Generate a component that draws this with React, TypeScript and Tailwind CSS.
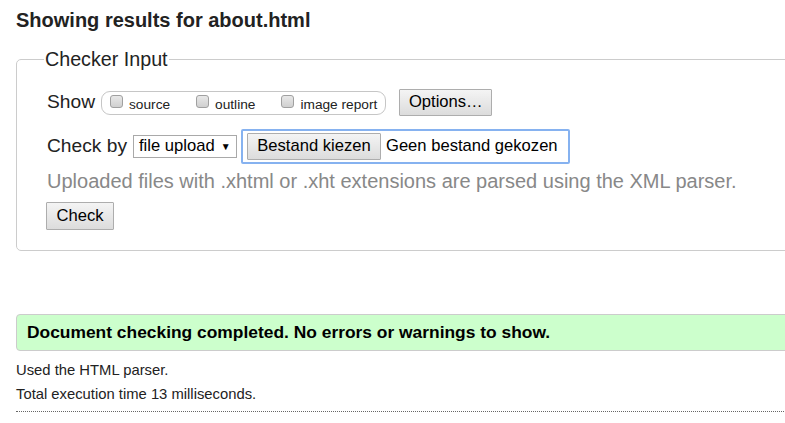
import React from "react";

const Box = ({ label }: { label: string }) => (
  <label className="flex items-start gap-[6px] pl-[8px] pr-[18px] last:pr-[8px]">
    <span className="mt-[1px] block w-[13px] h-[13px] rounded-[3px] border border-[#a0a0a0] bg-gradient-to-b from-[#e8e8e8] to-[#d0d0d0]" />
    <span className="text-[13.7px] leading-[16px] mt-[3px]">{label}</span>
  </label>
);

const btn =
  "border border-[#adadad] bg-gradient-to-b from-[#f4f4f4] to-[#dcdcdc] text-black rounded-[1px]";

const App = () => {
  return (
    <div className="w-[785px] h-[423px] overflow-hidden bg-white text-[#222] font-['Liberation_Sans',Arial,sans-serif]">
      <div className="w-[830px] pl-4 pt-[9px]">
        <h2 className="text-[20px] leading-[23px] font-bold">
          Showing results for about.html
        </h2>

        <fieldset className="mt-[16px] border border-[#ccc] rounded-[5px] pl-[30px] pb-[19px] h-[203px]">
          <legend className="ml-[-3px] px-[1px] text-[19.7px] leading-[23px]">
            Checker Input
          </legend>

          <div className="flex items-center mt-[18px] h-[27px]">
            <span className="text-[19.2px] mr-[6px]">Show</span>
            <div className="flex h-[24px] items-start pt-[2px] border border-[#c6c6c6] rounded-[9px]">
              <Box label="source" />
              <Box label="outline" />
              <Box label="image report" />
            </div>
            <button className={`${btn} ml-[13px] h-[27px] w-[93px] text-[16.6px]`}>
              Options…
            </button>
          </div>

          <div className="flex items-center mt-[12px] h-[36px]">
            <span className="text-[19.2px] mr-[6px]">Check by</span>
            <div className="h-[23px] w-[104px] border border-[#a9a9a9] bg-white flex items-center pl-[5px] text-[16.6px] text-black">
              file upload
              <span className="ml-[6px] text-[10px]">▼</span>
            </div>
            <div className="ml-[4px] h-[35px] w-[329px] border-2 border-[#86b2f0] rounded-[2px] flex items-center pl-[4px]">
              <button className={`${btn} h-[27px] w-[134px] text-[16.6px]`}>
                Bestand kiezen
              </button>
              <span className="ml-[5px] text-[16.6px] text-black">Geen bestand gekozen</span>
            </div>
          </div>

          <p className="mt-[2px] text-[20px] leading-[30px] text-[#888]">
            Uploaded files with .xhtml or .xht extensions are parsed using the XML parser.
          </p>

          <button className={`${btn} mt-[6px] ml-[-1px] h-[28px] w-[68px] text-[16.6px]`}>
            Check
          </button>
        </fieldset>

        <div className="mt-[63px] h-[37px] flex items-center pl-[10px] bg-[#ccffcc] border border-[#ccc] rounded-[4px] text-[17.4px] font-bold text-black">
          Document checking completed. No errors or warnings to show.
        </div>

        <p className="mt-[10px] text-[14.8px] leading-[18px]">Used the HTML parser.</p>
        <p className="mt-[6px] text-[14.8px] leading-[18px]">
          Total execution time 13 milliseconds.
        </p>
        <div className="mt-[8px] border-t border-dotted border-[#666]" />
      </div>
    </div>
  );
};

export default App;
